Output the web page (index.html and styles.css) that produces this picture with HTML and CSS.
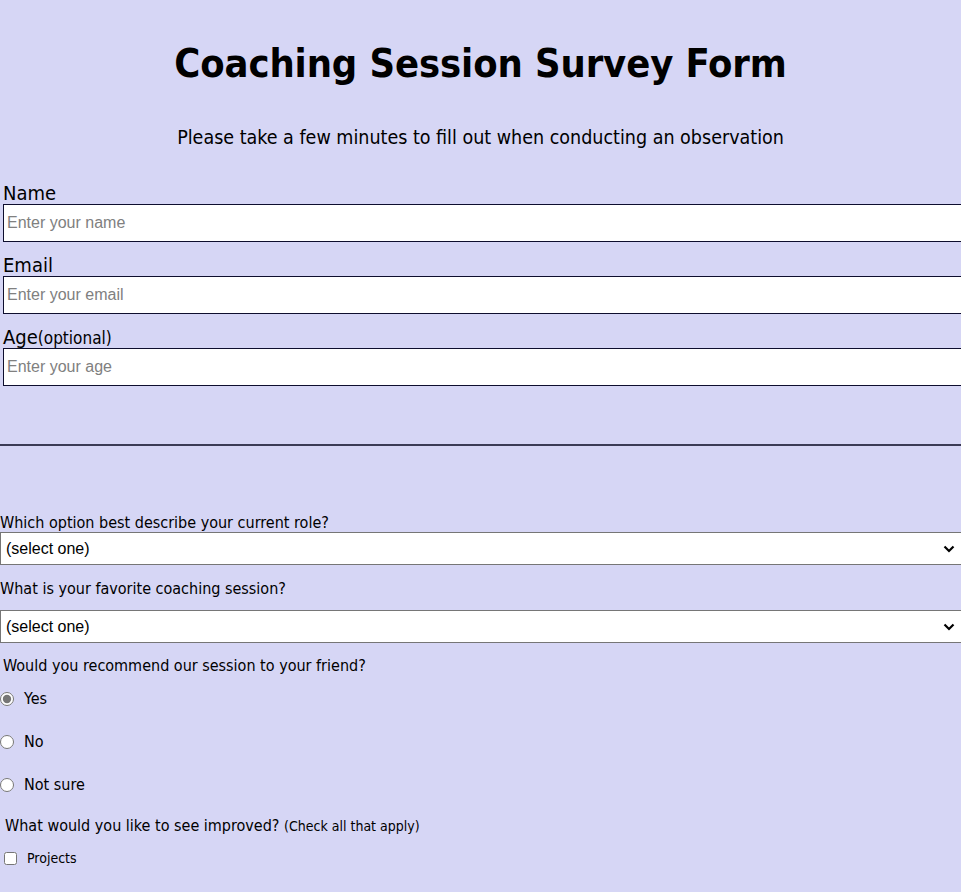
FILE: index.html
```html
<!DOCTYPE html>
<html lang="en">
<head>
<meta charset="utf-8">
<title>Coaching Session Survey Form</title>
<link rel="stylesheet" href="styles.css">
</head>
<body>
<h1 class="title">Coaching Session Survey Form</h1>
<p class="description">Please take a few minutes to fill out when conducting an observation</p>
<form class="survey">
  <div class="personal">
    <label class="big-label" for="name">Name</label>
    <input class="text-input" id="name" type="text" placeholder="Enter your name">
    <label class="big-label" for="email">Email</label>
    <input class="text-input" id="email" type="email" placeholder="Enter your email">
    <label class="big-label" for="age">Age<span class="optional">(optional)</span></label>
    <input class="text-input" id="age" type="number" placeholder="Enter your age">
  </div>
  <hr class="divider">
  <div class="questions">
    <label class="q-label q-role" for="role">Which option best describe your current role?</label>
    <select class="dropdown" id="role">
      <option>(select one)</option>
      <option>Student</option>
      <option>Teacher</option>
    </select>
    <label class="q-label q-fav" for="fav">What is your favorite coaching session?</label>
    <select class="dropdown" id="fav">
      <option>(select one)</option>
      <option>Planning</option>
      <option>Observation</option>
    </select>
    <p class="q-label q-rec">Would you recommend our session to your friend?</p>
    <label class="radio-row"><input class="radio" type="radio" name="rec" checked><span>Yes</span></label>
    <label class="radio-row"><input class="radio" type="radio" name="rec"><span>No</span></label>
    <label class="radio-row"><input class="radio" type="radio" name="rec"><span>Not sure</span></label>
    <p class="q-label q-imp">What would you like to see improved? <span class="small">(Check all that apply)</span></p>
    <label class="check-row"><input class="check" type="checkbox"><span>Projects</span></label>
  </div>
</form>
</body>
</html>
```

FILE: styles.css
```css
html, body {
  margin: 0;
  padding: 0;
}
body {
  background: #d6d6f5;
  color: #000;
  font-family: "DejaVu Sans Condensed", "DejaVu Sans", sans-serif;
  overflow-x: hidden;
}
.title {
  margin: 0;
  padding-top: 39px;
  font-size: 39.5px;
  line-height: 48px;
  font-weight: bold;
  text-align: center;
  letter-spacing: -0.1px;
}
.description {
  margin: 39px 0 0;
  font-size: 19.5px;
  line-height: 24px;
  text-align: center;
}
.survey {
  margin-top: 32px;
}
.personal {
  display: flex;
  flex-direction: column;
  align-items: flex-start;
}
.big-label {
  display: block;
  margin-left: 3px;
  font-size: 20px;
  line-height: 22px;
  height: 22px;
}
.big-label + .text-input {
  margin-bottom: 12px;
}
.optional {
  font-size: 17px;
  line-height: 1;
}
.text-input {
  box-sizing: border-box;
  width: 100%;
  margin: 0 0 0 3px;
  height: 38px;
  padding: 0 3px;
  border: 1px solid #0e0e2e;
  background: #fff;
  font-family: "Liberation Sans", Arial, sans-serif;
  font-size: 16px;
}
.text-input::placeholder {
  color: #808080;
}
.divider {
  margin: 46px 0 0;
  border: none;
  height: 2px;
  background: #3b3b55;
}
.questions {
  display: flex;
  flex-direction: column;
  align-items: flex-start;
  padding-top: 67px;
}
.q-label {
  display: block;
  margin: 0;
  font-size: 16px;
  line-height: 19px;
}
.dropdown {
  box-sizing: border-box;
  width: calc(100% + 4px);
  height: 33px;
  margin: 0;
  padding: 0 2px 0 5px;
  border: 1px solid #767676;
  border-radius: 0;
  background: #fff url("data:image/svg+xml,%3Csvg xmlns='http://www.w3.org/2000/svg' width='12' height='8' viewBox='0 0 12 8'%3E%3Cpath d='M1.5 1.5 6 6 10.5 1.5' fill='none' stroke='%23000' stroke-width='2.2'/%3E%3C/svg%3E") no-repeat right 9px center;
  -webkit-appearance: none;
  appearance: none;
  font-family: "Liberation Sans", Arial, sans-serif;
  font-size: 16px;
  color: #000;
}
.q-fav {
  margin-top: 14px;
  margin-bottom: 12px;
}
.q-rec {
  margin-top: 13px;
  margin-left: 3px;
}
.radio-row {
  display: flex;
  align-items: center;
  gap: 10px;
  height: 43px;
  font-size: 16px;
}
.q-rec + .radio-row {
  margin-top: 2px;
}
.radio {
  width: 14px;
  height: 14px;
  margin: 0;
  accent-color: #767676;
}
.q-imp {
  margin-top: 10px;
  margin-left: 5px;
}
.small {
  font-size: 14px;
}
.check-row {
  display: flex;
  align-items: center;
  gap: 10px;
  margin: 14px 0 0 4px;
  font-size: 14px;
}
.check {
  width: 13px;
  height: 13px;
  margin: 0;
}
```
